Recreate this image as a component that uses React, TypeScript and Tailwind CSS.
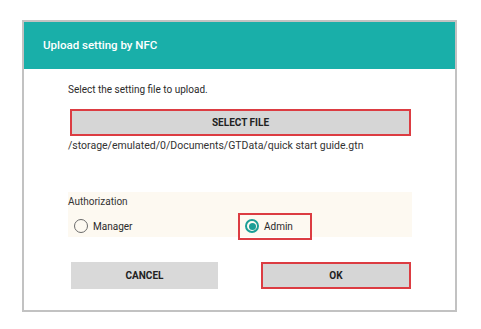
function Radio({ checked }: { checked: boolean }) {
  return checked ? (
    <span className="w-[14px] h-[14px] rounded-full border-2 border-[#1a9e96] flex items-center justify-center">
      <span className="w-[7px] h-[7px] rounded-full bg-[#1a9e96]" />
    </span>
  ) : (
    <span className="w-[14px] h-[14px] rounded-full border-[1.5px] border-[#6b6b6b]" />
  );
}

export default function App() {
  return (
    <div className="w-[481px] h-[329px] bg-white pt-[20px] pl-[22px] font-['Roboto','Liberation_Sans',sans-serif] text-[#2a2a2a]">
      <div className="w-[435px] h-[292px] border-2 border-[#c2c2c2] bg-white">
        {/* header */}
        <div className="h-[47px] bg-[#19afa9] flex items-center pl-[19px] text-white text-[11.5px] font-medium">
          Upload setting by NFC
        </div>

        <div className="pl-[44px] w-[388px]">
          <p className="mt-[14px] text-[10px] leading-[14px]">Select the setting file to upload.</p>

          <button className="mt-[12px] ml-[2px] w-[341px] h-[27px] bg-[#d6d6d6] border-2 border-[#dc3c42] text-[10px] font-bold text-[#222] flex items-center justify-center">
            SELECT FILE
          </button>

          <p className="mt-[3px] text-[10.5px] leading-[14px] text-[#333]">
            /storage/emulated/0/Documents/GTData/quick start guide.gtn
          </p>

          {/* authorization */}
          <div className="mt-[39px] w-[344px] h-[45px] bg-[#fdf9f1] pt-[3px]">
            <p className="text-[10px] leading-[14px] text-[#333]">Authorization</p>
            <div className="mt-[3px] flex items-center h-[28px]">
              <div className="flex items-center gap-[5px] pl-[6px] w-[170px]">
                <Radio checked={false} />
                <span className="text-[10px]">Manager</span>
              </div>
              <div className="h-[27px] w-[74px] border-2 border-[#dc3c42] flex items-center gap-[5px] pl-[5px]">
                <Radio checked />
                <span className="text-[10px]">Admin</span>
              </div>
            </div>
          </div>

          {/* actions */}
          <div className="mt-[25px] flex items-center">
            <button className="ml-[3px] w-[147px] h-[27px] bg-[#d9d9d9] text-[10px] font-bold text-[#222] flex items-center justify-center">
              CANCEL
            </button>
            <button className="ml-[43px] w-[150px] h-[27px] bg-[#d6d6d6] border-2 border-[#dc3c42] text-[10px] font-bold text-[#222] flex items-center justify-center">
              OK
            </button>
          </div>
        </div>
      </div>
    </div>
  );
}
